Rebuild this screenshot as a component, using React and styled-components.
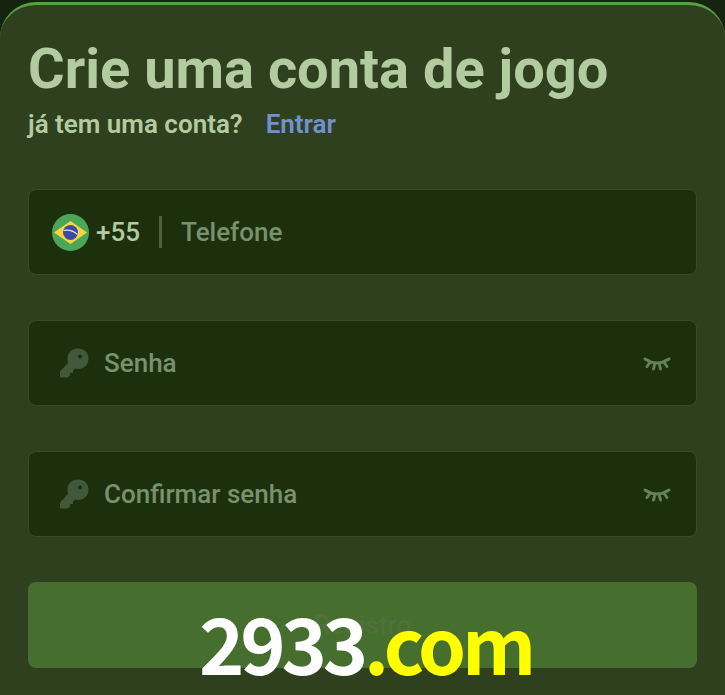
import React from 'react';
import styled, { createGlobalStyle } from 'styled-components';

const Global = createGlobalStyle`
	html, body { margin: 0; padding: 0; background: #14240f; }
	body { width: 725px; height: 695px; overflow: hidden; font-family: Roboto, "Liberation Sans", sans-serif; }
`;

const Page = styled.div`
	position: relative;
	width: 725px;
	height: 695px;
	padding-top: 2px;
	box-sizing: border-box;
	overflow: hidden;
`;

const Panel = styled.div`
	box-sizing: border-box;
	height: 740px;
	padding: 30px 28px 0 28px;
	background: #2f401e;
	border-top: 3px solid #5a9e45;
	border-radius: 36px 36px 0 0;
`;

const Title = styled.h1`
	margin: 0;
	font-size: 56px;
	line-height: 68px;
	font-weight: 700;
	color: #b3cba0;
`;

const Sub = styled.div`
	display: flex;
	gap: 23px;
	margin-top: 4px;
	margin-bottom: 48px;
	font-size: 26px;
	line-height: 34px;
	font-weight: 600;
	color: #b3cba0;
`;

const Login = styled.a`
	color: #7391d2;
`;

const Field = styled.div`
	box-sizing: border-box;
	display: flex;
	align-items: center;
	width: 669px;
	height: 86px;
	margin-bottom: 45px;
	padding: ${props => props.$phone ? '0 23px' : '0 25px 0 30px'};
	background: #1c300e;
	border: 1px solid #364e25;
	border-radius: 8px;
	font-size: 26px;
	font-weight: 500;
`;

const Code = styled.span`
	margin-left: 7px;
	color: #b3cba0;
`;

const Divider = styled.span`
	width: 3px;
	height: 32px;
	margin: 0 19px 0 19px;
	background: #4c6140;
`;

const Hint = styled.span`
	flex: 1;
	color: #78926e;
	margin-left: ${props => props.$icon ? '15px' : '0'};
`;

const Submit = styled.div`
	display: flex;
	align-items: center;
	justify-content: center;
	width: 669px;
	height: 86px;
	background: #466e2e;
	border-radius: 8px;
	font-size: 26px;
	font-weight: 500;
	color: #50703c;
`;

const Watermark = styled.div`
	position: absolute;
	left: 199px;
	top: 592px;
	font-family: "Noto Sans CJK KR", "Noto Sans", sans-serif;
	font-size: 77px;
	line-height: 100px;
	font-weight: 700;
	letter-spacing: -4.2px;
	color: #fff;
	white-space: nowrap;
`;

const Domain = styled.span`
	color: #ffff00;
`;

const Flag = () => (
	<svg width="37" height="37" viewBox="0 0 37 37">
		<circle cx="18.5" cy="18.5" r="18.5" fill="#4ca65a" />
		<path d="M18.5 7 L35 18.5 L18.5 30 L2 18.5 Z" fill="#f5d63c" />
		<circle cx="18.5" cy="18.5" r="7.5" fill="#3d4aa8" />
		<path d="M11.5 16.5 Q19 15 25.5 20.5" fill="none" stroke="#e8e8f0" strokeWidth="1.2" />
	</svg>
);

const Key = () => (
	<svg width="30" height="30" viewBox="0 0 30 30">
		<path
			fill="#41583a"
			fillRule="evenodd"
			d="M19 0.5 C25.2 0.5 29.5 4.8 29.5 10.5 C29.5 16.5 25 21 19 21 C18 21 17 20.8 16 20.5 L14 22.5 L14 25 L11 25 L11 27.5 L8.5 29.5 L1 29.5 L1 23.5 L9 15 C8.6 13.6 8.4 12 8.4 10.5 C8.4 4.8 13 0.5 19 0.5 Z M21 6.5 A2 2 0 1 0 21 10.5 A2 2 0 1 0 21 6.5 Z"
		/>
	</svg>
);

const Lashes = () => (
	<svg width="28" height="16" viewBox="0 0 28 16" fill="none" stroke="#65805a" strokeWidth="3" strokeLinecap="round">
		<path d="M2 4 Q14 12 26 4" />
		<path d="M6.5 8 L4 11.5" />
		<path d="M11.5 10 L10.5 14" />
		<path d="M16.5 10 L17.5 14" />
		<path d="M21.5 8 L24 11.5" />
	</svg>
);

export default function App() {
	return (
		<Page>
			<Global />
			<Panel>
				<Title>Crie uma conta de jogo</Title>
				<Sub>
					<span>já tem uma conta?</span>
					<Login>Entrar</Login>
				</Sub>
				<Field $phone>
					<Flag />
					<Code>+55</Code>
					<Divider />
					<Hint>Telefone</Hint>
				</Field>
				<Field>
					<Key />
					<Hint $icon>Senha</Hint>
					<Lashes />
				</Field>
				<Field>
					<Key />
					<Hint $icon>Confirmar senha</Hint>
					<Lashes />
				</Field>
				<Submit>Registro</Submit>
			</Panel>
			<Watermark>2933<Domain>.com</Domain></Watermark>
		</Page>
	);
}
